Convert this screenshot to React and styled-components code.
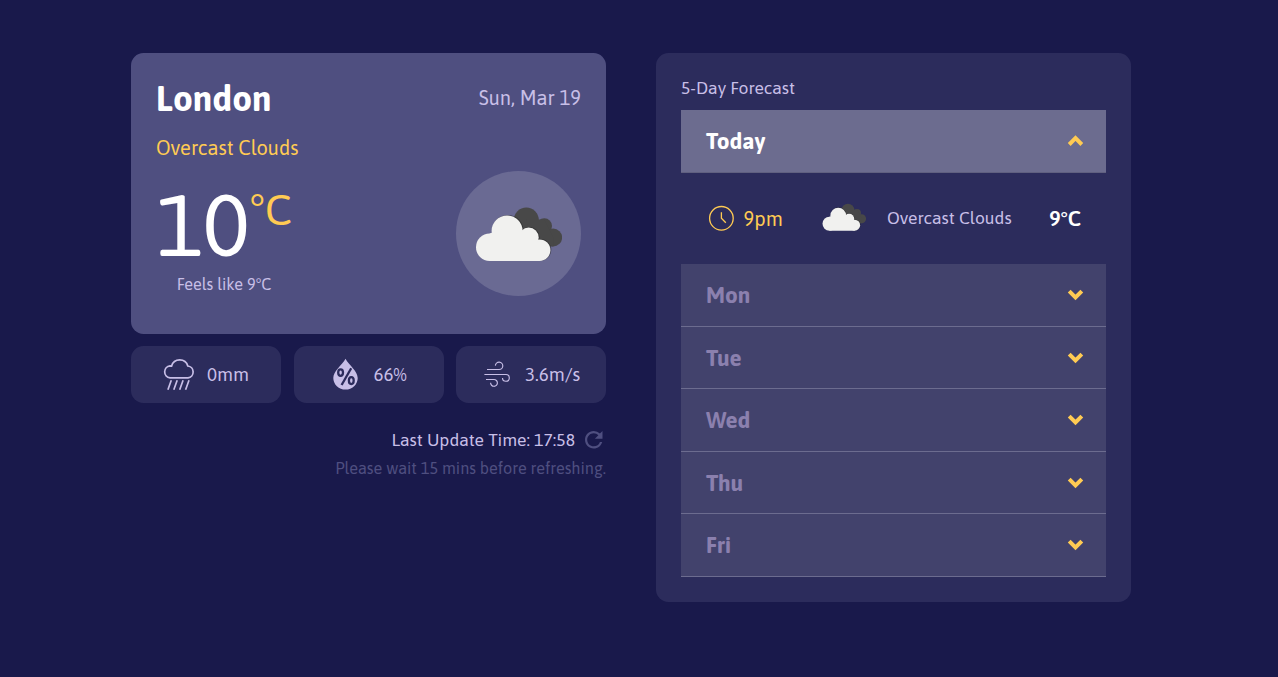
import React, { useState } from "react";
import styled, { createGlobalStyle } from "styled-components";

const GlobalStyle = createGlobalStyle`
  * { box-sizing: border-box; }
  body {
    margin: 0;
    background: #19194b;
    color: #c8bfe7;
    font-family: "Asap", Lato, "Open Sans", sans-serif;
    font-size: 17.5px;
  }
  h1, h2, h3, p { margin: 0; font-weight: 400; }
  svg { flex: none; }
`;

const Page = styled.main`
  display: flex;
  gap: 50px;
  align-items: flex-start;
  width: 1131px;
  height: 677px;
  padding: 53px 0 0 131px;
`;

const Column = styled.section`
  width: 475px;
  flex: none;
`;

const CurrentCard = styled.article`
  height: 281px;
  padding: 25px;
  border-radius: 12.5px;
  background: #4f4f80;
`;

const CardHeader = styled.header`
  display: flex;
  justify-content: space-between;
  align-items: center;
  height: 40px;
`;

const City = styled.h1`
  font-size: 35px;
  line-height: 40px;
  font-weight: 700;
  color: #fff;
`;

const DateText = styled.p`
  font-size: 20px;
  line-height: 40px;
`;

const Condition = styled.p`
  margin-top: 17px;
  font-size: 20px;
  line-height: 26px;
  color: #ffcb53;
`;

const CardBody = styled.div`
  display: flex;
  justify-content: space-between;
  margin-top: 10px;
`;

const Reading = styled.div`
  width: 136px;
  padding-top: 14px;
`;

const Temperature = styled.div`
  display: flex;
  align-items: flex-start;
  height: 80px;
  color: #fff;
  font-size: 87.5px;
  line-height: 80px;
`;

const Unit = styled.span`
  font-size: 43.75px;
  line-height: 48px;
  color: #ffcb53;
`;

const FeelsLike = styled.p`
  margin-top: 8px;
  font-size: 16.25px;
  line-height: 22px;
  text-align: center;
  white-space: nowrap;
`;

const IconDisc = styled.div`
  display: flex;
  align-items: center;
  justify-content: center;
  width: 125px;
  height: 125px;
  border-radius: 50%;
  background: #6a6a93;
`;

const Stats = styled.div`
  display: flex;
  justify-content: space-between;
  margin-top: 12px;
`;

const Stat = styled.div`
  display: flex;
  align-items: center;
  width: 150px;
  height: 57px;
  padding: 0 0 1px ${(p) => p.$inset}px;
  gap: ${(p) => p.$gap}px;
  border-radius: 12.5px;
  background: #2c2c5c;
  font-size: 18.75px;
`;

const UpdateRow = styled.div`
  display: flex;
  justify-content: flex-end;
  align-items: center;
  gap: 10px;
  height: 24px;
  margin-top: 25px;
  padding-right: 3.5px;
`;

const UpdateText = styled.p`
  font-size: 17.5px;
  line-height: 24px;
`;

const RefreshNote = styled.p`
  margin-top: 5px;
  font-size: 16.25px;
  line-height: 22px;
  text-align: right;
  color: #4f4f80;
`;

const ForecastPanel = styled(Column)`
  height: 549px;
  padding: 25px;
  border-radius: 12.5px;
  background: #2c2c5c;
`;

const PanelTitle = styled.h2`
  height: 32px;
  font-size: 17.5px;
  line-height: 20px;
`;

const DayButton = styled.button`
  display: flex;
  align-items: center;
  justify-content: space-between;
  width: 100%;
  height: 62.5px;
  padding: 0 22px 0 25px;
  border: 0;
  border-bottom: 1px solid ${(p) => (p.$open ? "#606080" : "#6c6c8f")};
  background: ${(p) => (p.$open ? "#6c6c8f" : "#42426c")};
  color: ${(p) => (p.$open ? "#fff" : "#8b80ae")};
  font: 700 22.5px/28px "Asap", Lato, sans-serif;
  text-align: left;
`;

const HourRow = styled.div`
  display: flex;
  align-items: center;
  height: 91.8px;
  padding: 0 25px 0 27px;
`;

const Hour = styled.span`
  margin-left: 9.5px;
  width: 78px;
  font-size: 20px;
  color: #ffcb53;
`;

const HourIcon = styled.span`
  display: flex;
  padding-bottom: 3px;
`;

const HourCondition = styled.span`
  flex: 1;
  margin-left: 21.5px;
  font-size: 17.5px;
`;

const HourTemp = styled.span`
  font-size: 21.25px;
  font-weight: 600;
  color: #fff;
`;

function CloudsIcon({ width, height }) {
  return (
    <svg width={width} height={height} viewBox="4.7 11.5 87 54" aria-hidden="true">
      <g fill="#484848">
        <circle cx="56" cy="24.6" r="12.5" />
        <circle cx="74" cy="30.4" r="7.7" />
        <circle cx="82.8" cy="42" r="9" />
        <path d="M56 24 L74 24 L83 42 V51 H60 Z" />
      </g>
      <g fill="#242424" fillOpacity=".55">
        <circle cx="37.5" cy="35" r="15.6" />
        <circle cx="59.1" cy="41.8" r="10.2" />
        <circle cx="70.1" cy="54.4" r="10.9" />
      </g>
      <g fill="#f1f1ef">
        <circle cx="19.4" cy="51.8" r="13.7" />
        <circle cx="36.8" cy="35.5" r="15.5" />
        <circle cx="58.4" cy="42.1" r="10" />
        <circle cx="69.3" cy="54.7" r="10.8" />
        <path d="M19.4 65.5 V38 L37 32 L58 38 L69.3 48 V65.5 Z" />
      </g>
    </svg>
  );
}

function RainIcon() {
  return (
    <svg width="32" height="32" viewBox="0 0 32 32" fill="none" stroke="#c8bfe7" aria-hidden="true">
      <path
        d="M7 19.9 A6.1 6.1 0 0 1 7 7.8 L8.6 8 A8.4 8.4 0 0 1 24.8 8 A6 6 0 0 1 25 19.9 Z"
        strokeWidth="1.7"
      />
      <path d="M8.3 22.2 4.9 31.7M14.2 22.2 10.8 31.7M20.1 22.2 16.7 31.7M26 22.2 22.6 31.7" strokeWidth="1.7" />
    </svg>
  );
}

function HumidityIcon() {
  return (
    <svg width="25" height="32" viewBox="0 0 25 32" fill="none" aria-hidden="true">
      <path d="M12.5 .8 C16 7.2 24.7 13 24.7 20 A12.2 11.6 0 0 1 .3 20 C.3 13 9 7.2 12.5 .8 Z" fill="#c8bfe7" />
      <g stroke="#2c2c5c" strokeWidth="2.3">
        <ellipse cx="7.6" cy="14.6" rx="2.4" ry="3.3" />
        <ellipse cx="18.3" cy="22.6" rx="2.4" ry="3.5" />
        <path d="M18.2 10.2 8.6 27" />
      </g>
    </svg>
  );
}

function WindIcon() {
  return (
    <svg width="27" height="26" viewBox="0 0 27 26" fill="none" stroke="#c8bfe7" strokeWidth="1.15" aria-hidden="true">
      <path d="M3 8.5 H15 A3.7 3.7 0 1 0 11.4 4.6" />
      <path d="M.4 13.5 H22 A3.4 3.4 0 1 1 18.5 17" />
      <path d="M2 18.5 H10 A3.4 3.4 0 1 1 6.6 21.8" />
    </svg>
  );
}

function RefreshIcon() {
  return (
    <svg width="17.5" height="17.5" viewBox="4 4 16 16" fill="#4f4f80" aria-hidden="true">
      <path d="M17.65 6.35A7.96 7.96 0 0 0 12 4c-4.42 0-7.99 3.58-7.99 8s3.57 8 7.99 8c3.73 0 6.84-2.55 7.73-6h-2.08A5.99 5.99 0 0 1 12 18c-3.31 0-6-2.69-6-6s2.69-6 6-6c1.66 0 3.14.69 4.22 1.78L13 11h7V4l-2.35 2.35z" />
    </svg>
  );
}

function ClockIcon() {
  return (
    <svg width="26" height="26" viewBox="0 0 26 26" fill="none" stroke="#ffcb53" strokeWidth="1.3" aria-hidden="true">
      <circle cx="13.4" cy="13.3" r="11.8" />
      <path d="M13.4 7.3 V13.3 L17.8 17.8" />
    </svg>
  );
}

function Chevron({ up }) {
  return (
    <svg width="17" height="12" viewBox="0 0 17 12" aria-hidden="true">
      <path
        d={up ? "M2.2 9.5 8.5 3.2 14.8 9.5" : "M2.2 2.2 8.5 8.5 14.8 2.2"}
        fill="none"
        stroke="#ffcb53"
        strokeWidth="4"
      />
    </svg>
  );
}

const days = ["Today", "Mon", "Tue", "Wed", "Thu", "Fri"];

export default function App() {
  const [openDay, setOpenDay] = useState("Today");
  return (
    <>
      <GlobalStyle />
      <Page>
        <Column>
          <CurrentCard>
            <CardHeader>
              <City>London</City>
              <DateText>Sun, Mar 19</DateText>
            </CardHeader>
            <Condition>Overcast Clouds</Condition>
            <CardBody>
              <Reading>
                <Temperature>
                  10<Unit>°C</Unit>
                </Temperature>
                <FeelsLike>Feels like 9°C</FeelsLike>
              </Reading>
              <IconDisc>
                <CloudsIcon width={87} height={54} />
              </IconDisc>
            </CardBody>
          </CurrentCard>
          <Stats>
            <Stat $inset={31.5} $gap={12.5}>
              <RainIcon />
              0mm
            </Stat>
            <Stat $inset={39} $gap={16}>
              <HumidityIcon />
              66%
            </Stat>
            <Stat $inset={28} $gap={14}>
              <WindIcon />
              3.6m/s
            </Stat>
          </Stats>
          <UpdateRow>
            <UpdateText>Last Update Time: 17:58</UpdateText>
            <RefreshIcon />
          </UpdateRow>
          <RefreshNote>Please wait 15 mins before refreshing.</RefreshNote>
        </Column>
        <ForecastPanel>
          <PanelTitle>5-Day Forecast</PanelTitle>
          {days.map((day) => (
            <React.Fragment key={day}>
              <DayButton $open={day === openDay} onClick={() => setOpenDay(day)}>
                {day}
                <Chevron up={day === openDay} />
              </DayButton>
              {day === openDay && (
                <HourRow>
                  <ClockIcon />
                  <Hour>9pm</Hour>
                  <HourIcon>
                    <CloudsIcon width={44} height={28} />
                  </HourIcon>
                  <HourCondition>Overcast Clouds</HourCondition>
                  <HourTemp>9°C</HourTemp>
                </HourRow>
              )}
            </React.Fragment>
          ))}
        </ForecastPanel>
      </Page>
    </>
  );
}
